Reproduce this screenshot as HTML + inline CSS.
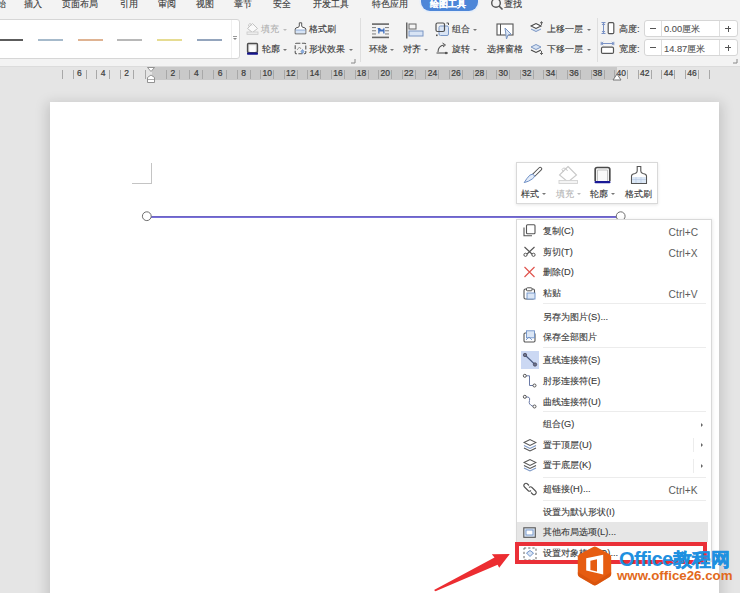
<!DOCTYPE html>
<html><head><meta charset="utf-8">
<style>
*{margin:0;padding:0;box-sizing:border-box}
html,body{width:740px;height:593px;overflow:hidden}
body{position:relative;background:#e5e5e5;font-family:"Liberation Sans",sans-serif;color:#333}
.a{position:absolute}
.t{position:absolute;font-size:9.3px;line-height:12px;white-space:nowrap;color:#3a3a3a;-webkit-text-stroke:0.12px currentColor}
.car{position:absolute;width:0;height:0;border-left:2px solid transparent;border-right:2px solid transparent;border-top:2px solid #777}
#ribbon{left:0;top:0;width:740px;height:66px;background:#f3f3f3}
.ln{position:absolute;top:39px;height:1.6px;width:25px}
.sep{position:absolute;width:1px;background:#dedede}
.mi{position:absolute;left:543px;font-size:9.3px;line-height:12px;white-space:nowrap;color:#3a3a3a;-webkit-text-stroke:0.12px currentColor}
.sc{position:absolute;left:668.5px;font-size:10.2px;line-height:12px;color:#5c5c5c;white-space:nowrap;letter-spacing:0.1px}
.msep{position:absolute;left:543px;width:163px;height:1px;background:#ececec}
.tick{position:absolute;top:70px;width:1px;height:9px;background:#a8a8a8}
.rn{position:absolute;top:68.5px;font-size:8.5px;line-height:9px;color:#3a3a3a;-webkit-text-stroke:0.2px currentColor;width:14px;text-align:center}

body.tofu .cj{display:inline-block;width:1em;height:1.05em;vertical-align:-0.15em;position:relative;-webkit-text-fill-color:transparent;-webkit-text-stroke:0;overflow:hidden}
body.tofu .cj::after{content:"";position:absolute;left:0.05em;top:0.04em;width:0.9em;height:0.98em;background:currentColor;opacity:0.4}
body.tofu .hv .cj::after{opacity:0.8}
</style></head><body class="tofu">

<!-- ribbon -->
<div id="ribbon" class="a"></div>
<div class="a" style="left:0;top:66px;width:740px;height:1px;background:#dcdcdc"></div>
<!-- tabs -->
<div class="t" style="left:-12px;top:-2px"><span class="cj">开</span><span class="cj">始</span></div>
<div class="t" style="left:24px;top:-2px"><span class="cj">插</span><span class="cj">入</span></div>
<div class="t" style="left:62px;top:-2px"><span class="cj">页</span><span class="cj">面</span><span class="cj">布</span><span class="cj">局</span></div>
<div class="t" style="left:120px;top:-2px"><span class="cj">引</span><span class="cj">用</span></div>
<div class="t" style="left:158px;top:-2px"><span class="cj">审</span><span class="cj">阅</span></div>
<div class="t" style="left:196px;top:-2px"><span class="cj">视</span><span class="cj">图</span></div>
<div class="t" style="left:234px;top:-2px"><span class="cj">章</span><span class="cj">节</span></div>
<div class="t" style="left:273px;top:-2px"><span class="cj">安</span><span class="cj">全</span></div>
<div class="t" style="left:313px;top:-2px"><span class="cj">开</span><span class="cj">发</span><span class="cj">工</span><span class="cj">具</span></div>
<div class="t" style="left:372px;top:-2px"><span class="cj">特</span><span class="cj">色</span><span class="cj">应</span><span class="cj">用</span></div>
<div class="a" style="left:420.5px;top:-8px;width:57.5px;height:19px;border-radius:9px;background:#4d86d8;box-shadow:0 0 0 1.5px #e6eef9"></div>
<div class="t" style="left:430px;top:-2px;color:#fff;font-weight:bold"><span class="cj">绘</span><span class="cj">图</span><span class="cj">工</span><span class="cj">具</span></div>
<svg class="a" style="left:490px;top:-2px" width="14" height="13"><circle cx="6" cy="5" r="4.3" fill="none" stroke="#555" stroke-width="1.4"/><line x1="9" y1="8" x2="12.5" y2="11.5" stroke="#555" stroke-width="1.6"/></svg>
<div class="t" style="left:504px;top:-2px"><span class="cj">查</span><span class="cj">找</span></div>

<!-- gallery -->
<div class="a" style="left:-5px;top:19px;width:245px;height:40px;background:#fff;border:1px solid #d6d6d6;border-radius:0 3px 3px 0"></div>
<div class="sep" style="left:231px;top:20px;height:38px;background:#efefef"></div>
<div class="ln" style="left:-2px;background:#5c5c5c"></div>
<div class="ln" style="left:38px;background:#a6bacb"></div>
<div class="ln" style="left:78px;background:#dfb392"></div>
<div class="ln" style="left:117px;background:#b8b8b8"></div>
<div class="ln" style="left:157px;background:#e6dc92"></div>
<div class="ln" style="left:197px;background:#94a5bd"></div>
<div class="a" style="left:233px;top:36px;width:4px;height:1px;background:#999"></div>
<div class="car" style="left:233px;top:38px;border-width:2.5px 2px 0 2px;border-top-color:#888"></div>


<!-- fill/outline group -->
<svg class="a" style="left:246px;top:22px" width="13" height="14"><path d="M6.5 1.5 L11.5 6.5 L6.5 10.5 L1.5 6.5 Z" fill="#fafafa" stroke="#c2c2c2" stroke-width="1"/><path d="M3.5 5 Q1.2 2.5 3.5 1.8 Q5.5 1.3 6 3.5" fill="none" stroke="#c2c2c2" stroke-width="0.9"/><rect x="1" y="10" width="11" height="2.3" fill="#f0f0f0" stroke="#c8c8c8" stroke-width="0.8"/></svg>
<div class="t" style="left:261px;top:23px;color:#b0b0b0"><span class="cj">填</span><span class="cj">充</span></div>
<div class="car" style="left:283px;top:29px;border-top-color:#bbb"></div>
<svg class="a" style="left:294px;top:22px" width="13" height="13"><path d="M5.3 0.8 H7.7 V4 Q7.7 5 9 5.3 Q11.8 5.8 11.8 7 V11.8 H1.2 V7 Q1.2 5.8 4 5.3 Q5.3 5 5.3 4 Z" fill="#fff" stroke="#555" stroke-width="1"/><rect x="1.7" y="8" width="9.6" height="3.3" fill="#d6e4f6"/><path d="M1.5 8 H11.5" stroke="#6f90c6" stroke-width="0.7"/></svg>
<div class="t" style="left:309px;top:23px"><span class="cj">格</span><span class="cj">式</span><span class="cj">刷</span></div>
<svg class="a" style="left:246px;top:42px" width="13" height="14"><rect x="1.6" y="1.6" width="9.8" height="8.8" rx="0.8" fill="#e9e9e9" stroke="#4d4d4d" stroke-width="1.5"/><rect x="3.5" y="3.5" width="6" height="6.5" fill="#fbfbfb"/><rect x="1" y="10.6" width="11" height="2.2" rx="0.8" fill="#14148c"/></svg>
<div class="t" style="left:262px;top:43px"><span class="cj">轮</span><span class="cj">廓</span></div>
<div class="car" style="left:283px;top:49px"></div>
<svg class="a" style="left:294px;top:42px" width="13" height="14"><rect x="1.2" y="1.2" width="10.6" height="10.6" rx="1.2" fill="none" stroke="#5a5a5a" stroke-width="1.1" stroke-dasharray="4 1.5"/><path d="M3 8 L5.5 5 L7 7" fill="none" stroke="#888" stroke-width="0.8"/><path d="M8.5 7.5 L10 9.5 L8.5 11.5 L7 9.5 Z" fill="#8fb0e0" stroke="#5f86c4" stroke-width="0.7"/></svg>
<div class="t" style="left:309px;top:43px"><span class="cj">形</span><span class="cj">状</span><span class="cj">效</span><span class="cj">果</span></div>
<div class="car" style="left:349px;top:49px"></div>
<svg class="a" style="left:351px;top:59px" width="5" height="5"><path d="M4 0 V4 H0" fill="none" stroke="#888" stroke-width="1"/></svg>
<div class="sep" style="left:360px;top:18px;height:44px"></div>

<!-- arrange group -->
<svg class="a" style="left:372px;top:23px" width="18" height="16"><rect x="0" y="0.3" width="17" height="1.6" fill="#666"/><rect x="0" y="4" width="4" height="1.1" fill="#888"/><rect x="13" y="4" width="4" height="1.1" fill="#888"/><rect x="0" y="7.2" width="4" height="1.1" fill="#888"/><rect x="13" y="7.2" width="4" height="1.1" fill="#888"/><rect x="0" y="10.4" width="4" height="1.1" fill="#888"/><rect x="13" y="10.4" width="4" height="1.1" fill="#888"/><path d="M5.5 5 H8 L9 6.5 H11 L12 4.5 L12.5 6 V10.5 H11.2 V8.5 H7.5 V10.5 H6.2 V7 Z" fill="#3f6fbf"/><rect x="0" y="13.6" width="17" height="1.6" fill="#666"/></svg>
<div class="t" style="left:369px;top:43px"><span class="cj">环</span><span class="cj">绕</span></div>
<div class="car" style="left:390px;top:49px"></div>
<svg class="a" style="left:405px;top:22px" width="19" height="17"><rect x="1" y="0.5" width="1.5" height="16" fill="#666"/><rect x="4" y="2" width="7" height="5" fill="none" stroke="#666" stroke-width="1"/><rect x="4" y="9" width="14" height="5" fill="#d8e4f5" stroke="#7a96c4" stroke-width="1"/></svg>
<div class="t" style="left:403px;top:43px"><span class="cj">对</span><span class="cj">齐</span></div>
<div class="car" style="left:424px;top:49px"></div>
<svg class="a" style="left:435px;top:22px" width="15" height="15"><rect x="4" y="4" width="9.5" height="9.5" rx="1.5" fill="#dae5f5" stroke="#7a98c8" stroke-width="1"/><rect x="1" y="1" width="8.5" height="8.5" rx="1.5" fill="none" stroke="#505050" stroke-width="1.2"/><path d="M11.5 1 H13.5 V3" fill="none" stroke="#505050" stroke-width="1"/><rect x="1" y="12.5" width="1.6" height="1.6" fill="#505050"/></svg>
<div class="t" style="left:452px;top:23px"><span class="cj">组</span><span class="cj">合</span></div>
<div class="car" style="left:473px;top:29px"></div>
<svg class="a" style="left:436px;top:42px" width="13" height="13"><path d="M2 10 Q2 4 8 3" fill="none" stroke="#555" stroke-width="1.1"/><path d="M6.5 1 L9.5 3 L7 5" fill="none" stroke="#555" stroke-width="1"/><line x1="0.5" y1="11" x2="12" y2="11" stroke="#555" stroke-width="1.1"/><circle cx="10" cy="11" r="1.2" fill="#555"/></svg>
<div class="t" style="left:452px;top:43px"><span class="cj">旋</span><span class="cj">转</span></div>
<div class="car" style="left:473px;top:49px"></div>
<svg class="a" style="left:496px;top:23px" width="19" height="18"><rect x="1" y="1" width="16" height="11" fill="#fff" stroke="#555" stroke-width="1.1"/><line x1="4.5" y1="1" x2="4.5" y2="12" stroke="#555" stroke-width="1"/><path d="M9 5 L15 11 L12 12 L10.5 16 Z" fill="#dbe6f5" stroke="#7a96c4" stroke-width="1"/></svg>
<div class="t" style="left:487px;top:43px"><span class="cj">选</span><span class="cj">择</span><span class="cj">窗</span><span class="cj">格</span></div>
<svg class="a" style="left:530px;top:21px" width="14" height="14"><path d="M1 5 L6 2.5 L11 5 L6 7.5 Z" fill="#fff" stroke="#444" stroke-width="1.1"/><path d="M1 8 L6 10.5 L11 8" fill="#d8e4f4" stroke="#7a96c4" stroke-width="1"/><path d="M11.5 4 V0.8 M10 2.2 L11.5 0.8 L13 2.2" fill="none" stroke="#555" stroke-width="0.9"/></svg>
<div class="t" style="left:547px;top:23px"><span class="cj">上</span><span class="cj">移</span><span class="cj">一</span><span class="cj">层</span></div>
<div class="car" style="left:587px;top:29px"></div>
<svg class="a" style="left:530px;top:42px" width="14" height="14"><path d="M1 5 L6 2.5 L11 5 L6 7.5 Z" fill="#d8e4f4" stroke="#7a96c4" stroke-width="1"/><path d="M1 8 L6 10.5 L11 8" fill="none" stroke="#444" stroke-width="1.1"/><path d="M11.5 9 V12.5 M10 11 L11.5 12.5 L13 11" fill="none" stroke="#555" stroke-width="0.9"/></svg>
<div class="t" style="left:547px;top:43px"><span class="cj">下</span><span class="cj">移</span><span class="cj">一</span><span class="cj">层</span></div>
<div class="car" style="left:587px;top:49px"></div>
<div class="sep" style="left:597px;top:18px;height:44px"></div>

<!-- size group -->
<svg class="a" style="left:600px;top:21px" width="15" height="14"><path d="M1.5 1.5 H5.5 M3.5 1.8 V12.2 M1.5 12.5 H5.5 M2 4 L3.5 2.3 L5 4 M2 10 L3.5 11.7 L5 10" fill="none" stroke="#7b93c6" stroke-width="1"/><rect x="8.2" y="1.6" width="5.6" height="11" rx="1.2" fill="#fff" stroke="#555" stroke-width="1.2"/></svg>
<div class="t" style="left:619px;top:23px"><span class="cj">高</span><span class="cj">度</span>:</div>
<svg class="a" style="left:600px;top:41px" width="15" height="14"><path d="M1.2 0.8 V4.2 M13.8 0.8 V4.2 M1.5 2.5 H13.5 M3.2 1 L1.6 2.5 L3.2 4 M11.8 1 L13.4 2.5 L11.8 4" fill="none" stroke="#7b93c6" stroke-width="1"/><rect x="1.5" y="6.2" width="12" height="6.2" rx="1.2" fill="#fff" stroke="#555" stroke-width="1.2"/></svg>
<div class="t" style="left:619px;top:43px"><span class="cj">宽</span><span class="cj">度</span>:</div>
<div class="a" style="left:644px;top:20px;width:94px;height:17px;background:#fff;border:1px solid #d6d6d6;border-radius:3px"></div>
<div class="sep" style="left:661px;top:21px;height:15px"></div>
<div class="sep" style="left:719px;top:21px;height:15px"></div>
<div class="a" style="left:650px;top:28px;width:6px;height:1.3px;background:#555"></div>
<div class="a" style="left:725px;top:28px;width:6px;height:1.3px;background:#555"></div>
<div class="a" style="left:727.5px;top:25.5px;width:1.3px;height:6px;background:#555"></div>
<div class="t" style="left:664px;top:23px;color:#555">0.00<span class="cj">厘</span><span class="cj">米</span></div>
<div class="a" style="left:644px;top:39px;width:94px;height:17px;background:#fff;border:1px solid #d6d6d6;border-radius:3px"></div>
<div class="sep" style="left:661px;top:40px;height:15px"></div>
<div class="sep" style="left:719px;top:40px;height:15px"></div>
<div class="a" style="left:650px;top:47px;width:6px;height:1.3px;background:#555"></div>
<div class="a" style="left:725px;top:47px;width:6px;height:1.3px;background:#555"></div>
<div class="a" style="left:727.5px;top:44.5px;width:1.3px;height:6px;background:#555"></div>
<div class="t" style="left:664px;top:42.5px;color:#555">14.87<span class="cj">厘</span><span class="cj">米</span></div>
<svg class="a" style="left:733px;top:59px" width="5" height="5"><path d="M4 0 V4 H0" fill="none" stroke="#888" stroke-width="1"/></svg>

<div class="a" style="left:152px;top:67px;width:465px;height:12.5px;background:#c9c9c9"></div>
<div class="tick" style="left:61.9px"></div>
<div class="tick" style="left:72.6px"></div>
<div class="tick" style="left:85.5px"></div>
<div class="tick" style="left:96.2px"></div>
<div class="tick" style="left:109.1px"></div>
<div class="tick" style="left:119.8px"></div>
<div class="tick" style="left:132.7px"></div>
<div class="tick" style="left:144.5px"></div>
<div class="tick" style="left:165.8px"></div>
<div class="tick" style="left:178.7px"></div>
<div class="tick" style="left:189.4px"></div>
<div class="tick" style="left:202.3px"></div>
<div class="tick" style="left:213.0px"></div>
<div class="tick" style="left:225.9px"></div>
<div class="tick" style="left:236.6px"></div>
<div class="tick" style="left:249.5px"></div>
<div class="tick" style="left:260.2px"></div>
<div class="tick" style="left:273.1px"></div>
<div class="tick" style="left:283.8px"></div>
<div class="tick" style="left:296.7px"></div>
<div class="tick" style="left:307.4px"></div>
<div class="tick" style="left:320.3px"></div>
<div class="tick" style="left:331.0px"></div>
<div class="tick" style="left:343.9px"></div>
<div class="tick" style="left:354.6px"></div>
<div class="tick" style="left:367.5px"></div>
<div class="tick" style="left:378.2px"></div>
<div class="tick" style="left:391.1px"></div>
<div class="tick" style="left:401.8px"></div>
<div class="tick" style="left:414.7px"></div>
<div class="tick" style="left:425.4px"></div>
<div class="tick" style="left:438.3px"></div>
<div class="tick" style="left:449.0px"></div>
<div class="tick" style="left:461.9px"></div>
<div class="tick" style="left:472.6px"></div>
<div class="tick" style="left:485.5px"></div>
<div class="tick" style="left:496.2px"></div>
<div class="tick" style="left:509.1px"></div>
<div class="tick" style="left:519.8px"></div>
<div class="tick" style="left:532.7px"></div>
<div class="tick" style="left:543.4px"></div>
<div class="tick" style="left:556.3px"></div>
<div class="tick" style="left:567.0px"></div>
<div class="tick" style="left:579.9px"></div>
<div class="tick" style="left:590.6px"></div>
<div class="tick" style="left:603.5px"></div>
<div class="tick" style="left:614.2px"></div>
<div class="tick" style="left:627.1px"></div>
<div class="tick" style="left:637.8px"></div>
<div class="tick" style="left:650.7px"></div>
<div class="tick" style="left:661.4px"></div>
<div class="tick" style="left:674.3px"></div>
<div class="tick" style="left:685.0px"></div>
<div class="tick" style="left:697.9px"></div>
<div class="tick" style="left:708.6px"></div>
<div class="rn" style="left:72.4px">6</div>
<div class="rn" style="left:96.0px">4</div>
<div class="rn" style="left:119.6px">2</div>
<div class="rn" style="left:165.8px">2</div>
<div class="rn" style="left:189.4px">4</div>
<div class="rn" style="left:213.0px">6</div>
<div class="rn" style="left:236.6px">8</div>
<div class="rn" style="left:260.2px">10</div>
<div class="rn" style="left:283.8px">12</div>
<div class="rn" style="left:307.4px">14</div>
<div class="rn" style="left:331.0px">16</div>
<div class="rn" style="left:354.6px">18</div>
<div class="rn" style="left:378.2px">20</div>
<div class="rn" style="left:401.8px">22</div>
<div class="rn" style="left:425.4px">24</div>
<div class="rn" style="left:449.0px">26</div>
<div class="rn" style="left:472.6px">28</div>
<div class="rn" style="left:496.2px">30</div>
<div class="rn" style="left:519.8px">32</div>
<div class="rn" style="left:543.4px">34</div>
<div class="rn" style="left:567.0px">36</div>
<div class="rn" style="left:590.6px">38</div>
<div class="rn" style="left:614.2px">40</div>
<div class="rn" style="left:637.8px">42</div>
<div class="rn" style="left:661.4px">44</div>
<div class="rn" style="left:685.0px">46</div>
<svg class="a" style="left:146px;top:66px" width="10" height="18"><path d="M1.5 1.5 H8.5 L5 5.5 Z" fill="#fff" stroke="#888" stroke-width="0.9"/><path d="M5 9 L8.5 11.5 V16.5 H1.5 V11.5 Z" fill="#fff" stroke="#888" stroke-width="0.9"/><line x1="1.5" y1="13.5" x2="8.5" y2="13.5" stroke="#888" stroke-width="0.7"/></svg>
<svg class="a" style="left:612px;top:73px" width="10" height="9"><path d="M5 1 L9 7 H1 Z" fill="#fff" stroke="#777" stroke-width="1"/></svg>
<div class="a" style="left:50px;top:102px;width:669px;height:500px;background:#fff;box-shadow:0 4px 12px 3px rgba(0,0,0,0.15)"></div>
<div class="a" style="left:151px;top:163px;width:1px;height:21px;background:#c4c4c4"></div>
<div class="a" style="left:132px;top:183px;width:20px;height:1px;background:#c4c4c4"></div>
<div class="a" style="left:150px;top:216px;width:467px;height:2px;background:linear-gradient(#6860b8,#7d74e6)"></div>
<svg class="a" style="left:140px;top:210px" width="14" height="14"><circle cx="6.8" cy="6.2" r="4.4" fill="#fff" stroke="#6e6e6e" stroke-width="1"/></svg>
<svg class="a" style="left:614px;top:210px" width="14" height="14"><circle cx="6.7" cy="6.2" r="4.4" fill="#fff" stroke="#6e6e6e" stroke-width="1"/></svg>
<div class="a" style="left:516px;top:162px;width:142px;height:41.5px;background:#fff;border:1px solid #d9d9d9;box-shadow:0 1px 3px rgba(0,0,0,0.10)"></div>
<svg class="a" style="left:522px;top:166px" width="22" height="18"><line x1="18.2" y1="2.8" x2="11.8" y2="9.2" stroke="#555" stroke-width="4" stroke-linecap="round"/><line x1="18.2" y1="2.8" x2="11.8" y2="9.2" stroke="#fff" stroke-width="2" stroke-linecap="round"/><path d="M12.6 9.6 Q10.5 7 7.8 9.2 Q4.5 12.5 2.2 16.6 Q6.8 15.6 10.2 13 Q13 11 12.6 9.6 Z" fill="#e3ecf9" stroke="#6f90c6" stroke-width="1"/></svg>
<div class="t" style="left:521px;top:188px"><span class="cj">样</span><span class="cj">式</span></div>
<div class="car" style="left:542px;top:193px"></div>
<svg class="a" style="left:558px;top:165px" width="21" height="20"><path d="M10 1.5 L18.5 10 L10 17 L1.5 10 Z" fill="#fff" stroke="#c9c9c9" stroke-width="1.1"/><path d="M5.5 7 Q2.5 4 5.5 3 Q8.5 2.5 9.5 6" fill="none" stroke="#c9c9c9" stroke-width="1"/><rect x="1" y="15.5" width="18.5" height="3" fill="#f4f4f4" stroke="#d2d2d2" stroke-width="0.9"/></svg>
<div class="t" style="left:556px;top:188px;color:#b5b5b5"><span class="cj">填</span><span class="cj">充</span></div>
<div class="car" style="left:577px;top:193px;border-top-color:#bbb"></div>
<svg class="a" style="left:593px;top:166px" width="19" height="19"><path d="M2.2 15 V3.5 Q2.2 1.5 4.2 1.5 H14.8 Q16.8 1.5 16.8 3.5 V15" fill="#fafafa" stroke="#4a4a4a" stroke-width="1.7"/><path d="M4.5 15 V4 H14.5 V15" fill="none" stroke="#aaa" stroke-width="0.7"/><rect x="1.5" y="15" width="16" height="2.2" rx="1" fill="#1a1a96"/></svg>
<div class="t" style="left:590px;top:188px"><span class="cj">轮</span><span class="cj">廓</span></div>
<div class="car" style="left:611px;top:193px"></div>
<svg class="a" style="left:630px;top:165px" width="18" height="20"><path d="M7.2 1.5 H10.8 V6 Q10.8 8 13 8.5 Q16.5 9 16.5 11 V18.5 H1.5 V11 Q1.5 9 5 8.5 Q7.2 8 7.2 6 Z" fill="#fff" stroke="#555" stroke-width="1.1"/><rect x="2" y="12" width="14" height="6" fill="#dce8f6"/><path d="M2 14.5 H16 M6 12 V18 M11 12 V18" stroke="#b5c8e4" stroke-width="0.6"/></svg>
<div class="t" style="left:625px;top:188px"><span class="cj">格</span><span class="cj">式</span><span class="cj">刷</span></div>
<div class="a" style="left:516px;top:219px;width:196px;height:343px;background:#fff;border:1px solid #d9d9d9;box-shadow:1px 0 3px rgba(0,0,0,0.08)"></div>
<div class="a" style="left:517px;top:522px;width:190.5px;height:20px;background:#e6e6e6"></div>
<div class="a" style="left:521px;top:351px;width:18px;height:18px;background:#cbd8f3"></div>
<div class="mi" style="top:224.9px"><span class="cj">复</span><span class="cj">制</span>(C)</div>
<div class="sc" style="top:226.9px">Ctrl+C</div>
<div class="mi" style="top:245.5px"><span class="cj">剪</span><span class="cj">切</span>(T)</div>
<div class="sc" style="top:247.5px">Ctrl+X</div>
<div class="mi" style="top:266.0px"><span class="cj">删</span><span class="cj">除</span>(D)</div>
<div class="mi" style="top:287.0px"><span class="cj">粘</span><span class="cj">贴</span></div>
<div class="sc" style="top:289.0px">Ctrl+V</div>
<div class="mi" style="top:310.5px"><span class="cj">另</span><span class="cj">存</span><span class="cj">为</span><span class="cj">图</span><span class="cj">片</span>(S)...</div>
<div class="mi" style="top:330.8px"><span class="cj">保</span><span class="cj">存</span><span class="cj">全</span><span class="cj">部</span><span class="cj">图</span><span class="cj">片</span></div>
<div class="mi" style="top:353.5px"><span class="cj">直</span><span class="cj">线</span><span class="cj">连</span><span class="cj">接</span><span class="cj">符</span>(S)</div>
<div class="mi" style="top:374.5px"><span class="cj">肘</span><span class="cj">形</span><span class="cj">连</span><span class="cj">接</span><span class="cj">符</span>(E)</div>
<div class="mi" style="top:395.5px"><span class="cj">曲</span><span class="cj">线</span><span class="cj">连</span><span class="cj">接</span><span class="cj">符</span>(U)</div>
<div class="mi" style="top:418.3px"><span class="cj">组</span><span class="cj">合</span>(G)</div>
<div class="mi" style="top:438.5px"><span class="cj">置</span><span class="cj">于</span><span class="cj">顶</span><span class="cj">层</span>(U)</div>
<div class="mi" style="top:459.0px"><span class="cj">置</span><span class="cj">于</span><span class="cj">底</span><span class="cj">层</span>(K)</div>
<div class="mi" style="top:483.0px"><span class="cj">超</span><span class="cj">链</span><span class="cj">接</span>(H)...</div>
<div class="sc" style="top:485.0px">Ctrl+K</div>
<div class="mi" style="top:505.8px"><span class="cj">设</span><span class="cj">置</span><span class="cj">为</span><span class="cj">默</span><span class="cj">认</span><span class="cj">形</span><span class="cj">状</span>(I)</div>
<div class="mi" style="top:526.0px"><span class="cj">其</span><span class="cj">他</span><span class="cj">布</span><span class="cj">局</span><span class="cj">选</span><span class="cj">项</span>(L)...</div>
<div class="mi" style="top:547.1px"><span class="cj">设</span><span class="cj">置</span><span class="cj">对</span><span class="cj">象</span><span class="cj">格</span><span class="cj">式</span>(O)...</div>
<div class="msep" style="top:303.1px"></div>
<div class="msep" style="top:347.0px"></div>
<div class="msep" style="top:410.8px"></div>
<div class="msep" style="top:476.5px"></div>
<div class="msep" style="top:499.5px"></div>
<div class="a" style="left:701px;top:422.5px;width:0;height:0;border-top:2px solid transparent;border-bottom:2px solid transparent;border-left:2.5px solid #666"></div>
<div class="a" style="left:701px;top:443.0px;width:0;height:0;border-top:2px solid transparent;border-bottom:2px solid transparent;border-left:2.5px solid #666"></div>
<div class="a" style="left:701px;top:463.5px;width:0;height:0;border-top:2px solid transparent;border-bottom:2px solid transparent;border-left:2.5px solid #666"></div>
<div class="a" style="left:693px;top:438.0px;width:1px;height:14px;background:#ececec"></div>
<div class="a" style="left:693px;top:458.5px;width:1px;height:14px;background:#ececec"></div>
<svg class="a" style="left:523px;top:224px" width="13" height="13"><rect x="3.5" y="0.8" width="8.5" height="9" rx="1" fill="#fff" stroke="#555" stroke-width="1.1"/><path d="M1 3.5 V11.8 H9" fill="none" stroke="#555" stroke-width="1.1"/></svg>
<svg class="a" style="left:523px;top:246px" width="13" height="11"><path d="M1.5 1 L10 9 M11.5 1 L3 9" stroke="#555" stroke-width="1.1" fill="none"/><circle cx="2.5" cy="8.8" r="1.6" fill="#fff" stroke="#555" stroke-width="1"/><circle cx="10.5" cy="8.8" r="1.6" fill="#fff" stroke="#555" stroke-width="1"/></svg>
<svg class="a" style="left:523px;top:266px" width="13" height="12"><path d="M1.5 1 L11.5 11 M11.5 1 L1.5 11" stroke="#e0554f" stroke-width="1.2" fill="none"/></svg>
<svg class="a" style="left:523px;top:287px" width="13" height="13"><rect x="1" y="2" width="10.5" height="10" rx="1.5" fill="#fff" stroke="#555" stroke-width="1.1"/><rect x="3.5" y="0.8" width="5.5" height="3" rx="0.8" fill="#fff" stroke="#555" stroke-width="1"/><rect x="4" y="6" width="8" height="6" fill="#dbe6f5" stroke="#6f92c8" stroke-width="0.9"/></svg>
<svg class="a" style="left:523px;top:330px" width="13" height="13"><rect x="1" y="3" width="11" height="9" rx="1.2" fill="#fff" stroke="#555" stroke-width="1.1"/><rect x="3.5" y="0.8" width="8" height="7" fill="#dbe6f5" stroke="#6f92c8" stroke-width="0.9"/><path d="M3 10 L6 7 L9 10" fill="none" stroke="#6f92c8" stroke-width="0.9"/></svg>
<svg class="a" style="left:522px;top:352px" width="16" height="16"><line x1="3" y1="3" x2="13" y2="12.5" stroke="#4a5a80" stroke-width="1.1"/><circle cx="3" cy="3" r="1.7" fill="#6a7290" stroke="#4a4a5a" stroke-width="0.8"/><circle cx="13" cy="12.5" r="1.7" fill="#6a7290" stroke="#4a4a5a" stroke-width="0.8"/></svg>
<svg class="a" style="left:522px;top:373px" width="16" height="16"><path d="M4 2.8 H7.5 V12.5 H11" fill="none" stroke="#6a7aa6" stroke-width="1"/><circle cx="2.8" cy="2.8" r="1.5" fill="#fff" stroke="#555" stroke-width="1"/><circle cx="12.5" cy="12.5" r="1.5" fill="#fff" stroke="#555" stroke-width="1"/></svg>
<svg class="a" style="left:522px;top:394px" width="16" height="16"><path d="M4 3 Q8.5 2.5 7.5 6.5 Q6 10.5 11 12.3" fill="none" stroke="#6a7aa6" stroke-width="1"/><circle cx="2.8" cy="2.8" r="1.5" fill="#fff" stroke="#555" stroke-width="1"/><circle cx="12.5" cy="12.5" r="1.5" fill="#fff" stroke="#555" stroke-width="1"/></svg>
<svg class="a" style="left:523px;top:438px" width="14" height="14"><path d="M1 4.5 L7 1.5 L13 4.5 L7 7.5 Z" fill="#fff" stroke="#555" stroke-width="1.1"/><path d="M1 7.5 L7 10.5 L13 7.5" fill="none" stroke="#7a96c4" stroke-width="1.1"/><path d="M1 10 L7 13 L13 10" fill="none" stroke="#555" stroke-width="1.1"/></svg>
<svg class="a" style="left:523px;top:458px" width="14" height="14"><path d="M1 4.5 L7 1.5 L13 4.5 L7 7.5 Z" fill="#fff" stroke="#555" stroke-width="1.1"/><path d="M1 7.5 L7 10.5 L13 7.5" fill="none" stroke="#555" stroke-width="1.1"/><path d="M1 10 L7 13 L13 10 L7 13 Z" fill="#dbe6f5" stroke="#7a96c4" stroke-width="1.1"/></svg>
<svg class="a" style="left:523px;top:482px" width="14" height="14"><path d="M6 3.5 L4.5 2 Q3 0.5 1.5 2 Q0 3.5 1.5 5 L5 8.5 Q6.5 10 8 8.5" fill="none" stroke="#555" stroke-width="1.1"/><path d="M8 10.5 L9.5 12 Q11 13.5 12.5 12 Q14 10.5 12.5 9 L9 5.5 Q7.5 4 6 5.5" fill="none" stroke="#555" stroke-width="1.1"/></svg>
<svg class="a" style="left:523px;top:527px" width="13" height="11"><rect x="0.8" y="0.8" width="11.5" height="9.5" fill="#dbe6f5" stroke="#555" stroke-width="1.1"/><rect x="3" y="3" width="7" height="5" fill="#fff" stroke="#6f92c8" stroke-width="0.9"/></svg>
<svg class="a" style="left:523px;top:547px" width="14" height="14"><rect x="1" y="1" width="12" height="12" fill="none" stroke="#666" stroke-width="1" stroke-dasharray="2.2 2"/><path d="M3.5 6 L7 3.5 L10.5 6 L7 9.5 Z" fill="#dbe6f5" stroke="#6f92c8" stroke-width="1"/></svg>
<div class="a" style="left:514.5px;top:542px;width:192.5px;height:22.2px;border:4.8px solid #ea3038"></div>
<svg class="a" style="left:0;top:0" width="740" height="593"><path d="M509.8 554 L491.8 554.2 L494.5 557.6 L434 590 L435.5 591.2 L497.6 564.8 L499.2 567.8 Z" fill="#ec2d31"/></svg>
<svg class="a" style="left:574px;top:542px" width="42" height="48"><path d="M19.2 4.9 Q20.8 4 22.4 4.9 L35.6 12.3 Q37.2 13.2 37.2 15 V32.2 Q37.2 34 35.6 34.9 L22.4 43.1 Q20.8 44 19.2 43.1 L5.4 34.9 Q3.8 34 3.8 32.2 V15 Q3.8 13.2 5.4 12.3 Z" fill="#e65c11"/><path d="M3.8 30 V32.2 Q3.8 34 5.4 34.9 L19.2 43.1 Q20.8 44 22.4 43.1 L35.6 34.9 Q37.2 34 37.2 32.2 V30 L20.8 40.5 Z" fill="#cf4e0b" opacity="0.55"/><path d="M12.2 16.3 L29.2 12.8 V32.6 L12.2 28.4 Z" fill="#fff"/><path d="M16.4 18.8 L23 17.2 V29.6 L16.4 28.1 Z" fill="#e65c11"/></svg>
<div class="a" style="left:619px;top:548px;font-size:20px;line-height:22px;font-weight:bold;color:#1f90e0;white-space:nowrap;letter-spacing:-0.5px">Office<span class="hv" style="font-size:19px;letter-spacing:0;-webkit-text-stroke:0.5px currentColor"><span class="cj">教</span><span class="cj">程</span><span class="cj">网</span></span></div>
<div class="a" style="left:617px;top:568.5px;font-size:13.3px;line-height:14px;font-weight:bold;color:#e2691c;white-space:nowrap">www.office26.com</div>

<script>
(function(){
var s=document.createElement('span');
s.style.cssText='position:absolute;left:-9999px;top:0;font-size:100px;font-family:"Liberation Sans",sans-serif;white-space:nowrap';
s.textContent='\u590d\u5236\u590d\u5236';
document.body.appendChild(s);
var w=s.getBoundingClientRect().width;
document.body.removeChild(s);
if(w>350){document.body.className=document.body.className.replace('tofu','');}
})();
</script>
</body></html>
